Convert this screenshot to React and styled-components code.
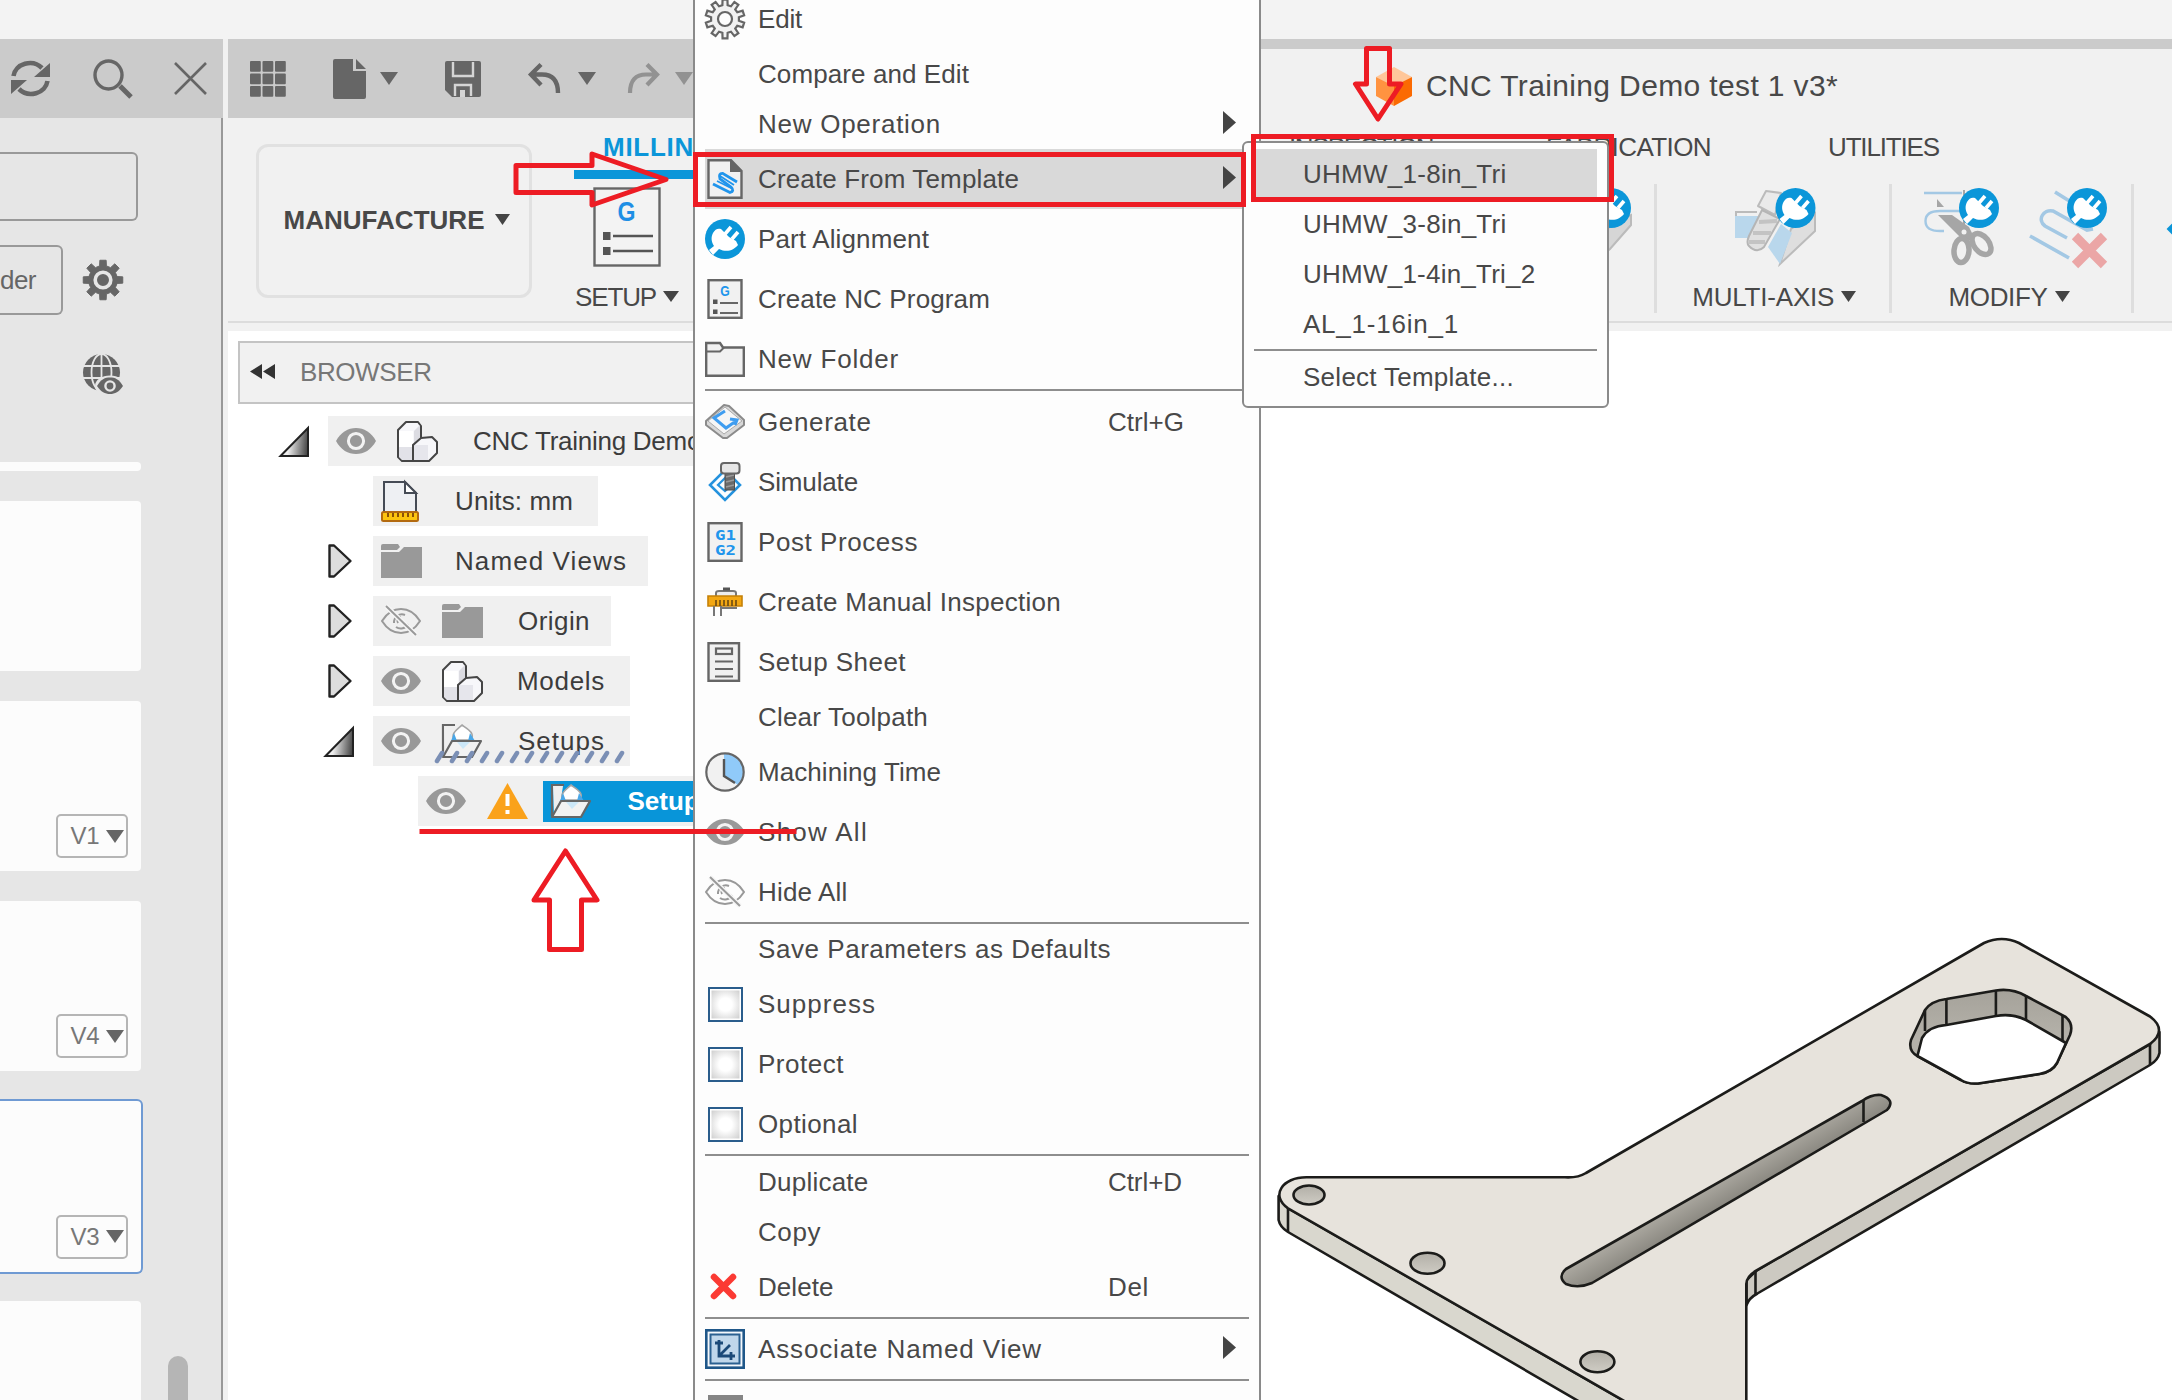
import React, { useLayoutEffect, useRef } from "react";
import styled, { createGlobalStyle, css } from "styled-components";

const Global = createGlobalStyle`
  * { box-sizing: border-box; }
  body { margin: 0; overflow: hidden; background: #fff; }
  svg { display: block; flex: none; overflow: visible; }
`;

/* ---------- text ---------- */
const FitSpan = styled.span`
  display: inline-block;
  white-space: pre;
  flex: none;
`;

/* Label whose tracking is adjusted so that it fills its design width. */
function Fit({ w, children }) {
  const ref = useRef(null);
  useLayoutEffect(() => {
    const el = ref.current;
    el.style.letterSpacing = "0px";
    const natural = el.getBoundingClientRect().width;
    el.style.letterSpacing = `${(w - natural) / children.length}px`;
  }, [w, children]);
  return <FitSpan ref={ref}>{children}</FitSpan>;
}

/* ---------- icons ---------- */
const gearPath = (n, c, inner, outer) => {
  const pts = [];
  const step = (Math.PI * 2) / n;
  for (let i = 0; i < n; i++) {
    const a = i * step - Math.PI / 2;
    [[-0.3, inner], [-0.2, outer], [0.2, outer], [0.3, inner]].forEach(([o, r]) =>
      pts.push(`${(c + r * Math.cos(a + o * step)).toFixed(2)} ${(c + r * Math.sin(a + o * step)).toFixed(2)}`)
    );
  }
  return `M${pts.join("L")}Z`;
};

const Svg = ({ w = 40, h = 40, children }) => (
  <svg width={w} height={h} viewBox={`0 0 ${w} ${h}`} fill="none">{children}</svg>
);

const Plug = () => (
  <g>
    <circle cx="20" cy="20" r="20" fill="#0b96d9" />
    <path d="M8 14C10 10 13 9 16 10L20 14L24 18L31 22L33 26C29 31 22 34 14 30L8 36L4 31L9 27C6 22 6 18 8 14Z" fill="#fff" />
    <path d="M20 15L26 8M27 20L33 13" stroke="#fff" strokeWidth="3.6" />
  </g>
);

const Caret = ({ w = 16, h = 11, c = "#444" }) => (
  <Svg w={w} h={h}><path d={`M0 0H${w}L${w / 2} ${h}Z`} fill={c} /></Svg>
);

const EyeIcon = () => (
  <Svg w={40} h={26}>
    <path d="M0 13C5 4 12 0 20 0S35 4 40 13C35 22 28 26 20 26S5 22 0 13Z" fill="#999" />
    <circle cx="20" cy="13" r="7.6" stroke="#f3f3f3" strokeWidth="3" />
    <circle cx="20" cy="13" r="4" fill="#999" />
  </Svg>
);
const EyeOffIcon = () => (
  <Svg w={40} h={30}>
    <path d="M1 15C6 7 12 3 20 3S34 7 39 15C34 23 28 27 20 27S6 23 1 15Z" stroke="#999" strokeWidth="2" />
    <path d="M27 18A8 8 0 0 1 15 21M13 17A8 8 0 0 1 24 9" stroke="#999" strokeWidth="2" />
    <path d="M17 17A4 4 0 0 1 20 11" stroke="#999" strokeWidth="2" />
    <path d="M5 0L35 29" stroke="#f6f6f6" strokeWidth="5" />
    <path d="M5 0L35 29" stroke="#999" strokeWidth="2" />
  </Svg>
);
const ModelIcon = () => (
  <Svg w={41} h={41}>
    <path d="M1 9L9 1H21L24 5V17L35 16L40 21V32L32 40H5L1 36Z" fill="#f7f7fa" stroke="#454545" strokeWidth="2" strokeLinejoin="round" />
    <path d="M2 26H16V10H2Z" fill="#fff" /><path d="M2 26H15V39H5L2 36Z" fill="#e2e2e8" />
    <path d="M17 24H31V39H17Z" fill="#e6e6ec" /><path d="M17 10L23 4V16L17 24Z" fill="#dcdce2" />
    <path d="M16 40V24L24 17" stroke="#454545" strokeWidth="2" />
  </Svg>
);
const FolderSolid = () => (
  <Svg w={41} h={34}>
    <path d="M0 2Q0 0 2 0H17L19 3L16 6H0Z" fill="#999" />
    <path d="M0 8H18L23 3H41V34H0Z" fill="#999" />
  </Svg>
);
const UnitsIcon = () => (
  <Svg w={38} h={41}>
    <path d="M3 1H24L35 12V32H3Z" fill="#eef0f3" stroke="#454b55" strokeWidth="2" />
    <path d="M24 1V12H35Z" fill="#fff" stroke="#454b55" strokeWidth="2" />
    <rect x="1" y="31" width="36" height="9" rx="1.5" fill="#fcc40e" stroke="#b36a10" strokeWidth="2" />
    <path d="M7 32V36M12 32V36M17 32V36M22 32V36M27 32V36M32 32V36" stroke="#8a5208" strokeWidth="2" />
  </Svg>
);
const SetupFolder = ({ fill = "#efefef" }) => (
  <Svg w={41} h={34}>
    <path d="M1 32V1H13" stroke="#666" strokeWidth="2.2" />
    <path d="M2 2H12L10 15L3 31Z" fill={fill} />
    <path d="M12 16C9 10 13 7 20 1C27 6 33 9 29 16Z" fill="#fff" stroke="#a5a5a5" strokeWidth="1.6" />
    <path d="M12 9L9 17H15ZM28 9L33 17H26Z" fill="#49a7e8" />
    <path d="M10 17H39L30 33H1Z" fill="#f2f2f2" stroke="#666" strokeWidth="2.2" strokeLinejoin="round" />
    <path d="M15 18H28L21 25Z" fill="#cbe7f8" />
  </Svg>
);
const WarnIcon = () => (
  <Svg w={41} h={36}>
    <path d="M20.500 0L41 36H0Z" fill="#faa21b" />
    <path d="M20.500 11V23M20.500 27V31" stroke="#fff" strokeWidth="4" />
  </Svg>
);
const Expanded = () => (
  <Svg w={30} h={31}>
    <defs><linearGradient id="tri" x1="0" x2="1" y1="0.500" y2="0.600"><stop offset="0.300" stopColor="#eee" /><stop offset="1" stopColor="#444" /></linearGradient></defs>
    <path d="M1.500 30L29 2V30Z" fill="url(#tri)" stroke="#222" strokeWidth="2" />
  </Svg>
);
const Collapsed = () => (
  <Svg w={24} h={34}><path d="M1.500 1.500H6L22.500 17L6 32.500H1.500Z" fill="#ddd" stroke="#222" strokeWidth="2.400" strokeLinejoin="round" /></Svg>
);

const RefreshIcon = () => (
  <Svg w={41} h={37}>
    <path d="M3.500 16A16.500 15 0 0 1 32 8M37.500 21A16.500 15 0 0 1 9 29" stroke="#666" strokeWidth="4.600" />
    <path d="M40 3V17H24ZM1 34V20H17Z" fill="#666" />
  </Svg>
);
const SearchIcon = () => (
  <Svg w={40} h={40}>
    <ellipse cx="15.500" cy="16" rx="13.500" ry="14" stroke="#666" strokeWidth="3.400" />
    <path d="M27 27L38 38" stroke="#666" strokeWidth="5" />
  </Svg>
);
const CloseIcon = () => <Svg w={33} h={33}><path d="M1 1L32 32M32 1L1 32" stroke="#666" strokeWidth="2.600" /></Svg>;
const GridIcon = () => (
  <Svg w={36} h={36}>
    {[0, 12.5, 25].map((x) => [0, 12.5, 25].map((y) => <rect key={`${x}-${y}`} x={x} y={y} width="10.800" height="10.800" rx="1" fill="#666" />))}
  </Svg>
);
const FileIcon = () => (
  <Svg w={33} h={40}><path d="M2 0H20V12H33V38Q33 40 31 40H2Q0 40 0 38V2Q0 0 2 0ZM23 0L33 10H23Z" fill="#666" /></Svg>
);
const SaveIcon = () => (
  <Svg w={36} h={36}>
    <path d="M2 0H34Q36 0 36 2V34Q36 36 34 36H7L0 29V2Q0 0 2 0Z" fill="#666" />
    <path d="M8 1V15H28V1" stroke="#d5d5d5" strokeWidth="2.400" />
    <path d="M10 35V24H26V35" stroke="#d5d5d5" strokeWidth="2.400" />
    <rect x="15" y="29" width="5" height="7" fill="#d5d5d5" />
  </Svg>
);
const UndoIcon = ({ c = "#666" }) => (
  <Svg w={33} h={31}><path d="M13 1.500L3 11.500L13 22M3 11.500H14C24 11.500 30 17 30 30" stroke={c} strokeWidth="4.400" /></Svg>
);
const RedoIcon = () => (
  <Svg w={33} h={31}><path d="M20 1.500L30 11.500L20 22M30 11.500H19C9 11.500 3 17 3 30" stroke="#929292" strokeWidth="4.200" /></Svg>
);
const GearSolid = () => (
  <Svg>
    <path d={gearPath(8, 20, 14.5, 20)} fill="#666" stroke="#666" />
    <circle cx="20" cy="20" r="7.800" stroke="#e6e6e6" strokeWidth="3.600" />
  </Svg>
);
const GlobeIcon = () => (
  <Svg>
    <circle cx="18.500" cy="18.500" r="18.500" fill="#666" />
    <path d="M18.500 0V37M0 12H37M0 24H37" stroke="#e6e6e6" strokeWidth="1.800" />
    <ellipse cx="18.500" cy="18.500" rx="10" ry="18.500" stroke="#e6e6e6" strokeWidth="1.800" />
    <ellipse cx="27" cy="32" rx="15" ry="10.500" fill="#e6e6e6" />
    <path d="M14 32C18 25 22 23.500 27 23.500S36 25 40 32C36 38 32 40 27 40S18 38 14 32Z" fill="#666" />
    <circle cx="27" cy="32" r="4.600" stroke="#e6e6e6" strokeWidth="2.400" />
  </Svg>
);
const RewindIcon = () => <Svg w={25} h={15}><path d="M12 0V15L0 7.500ZM25 0V15L13 7.500Z" fill="#333" /></Svg>;
const CubeIcon = () => (
  <Svg w={36} h={39}>
    <path d="M18 0L36 10L18 19L0 10Z" fill="#ffc79a" />
    <path d="M0 10L18 19V39L0 29Z" fill="#ff9340" /><path d="M36 10L18 19V39L36 29Z" fill="#fb6a02" />
  </Svg>
);
const SetupRibbonIcon = () => (
  <Svg w={68} h={80}>
    <rect x="1.500" y="1.500" width="65" height="77" fill="#f3f3f3" stroke="#666" strokeWidth="2.400" />
    <text x="33.500" y="34" textAnchor="middle" fontFamily="Liberation Sans, sans-serif" fontWeight="700" fontSize="28" textLength="18" lengthAdjust="spacingAndGlyphs" fill="#1f8fe5">G</text>
    <path d="M10 45H17.500V53H10ZM10 60H17.500V68H10Z" fill="#555" />
    <path d="M20 49H60M20 64H60" stroke="#555" strokeWidth="2.400" />
  </Svg>
);
const PocketIcon = () => (
  <Svg w={81} h={80}>
    <path d="M60 38L81 28V38L60 62L40 78Z" fill="#d6d6d6" stroke="#bbb" strokeWidth="2" />
    <g transform="translate(41 1)"><Plug /></g>
  </Svg>
);
const MultiAxisIcon = () => (
  <Svg w={81} h={80}>
    <path d="M0 29H27V51H0Z" fill="#b9d7ec" />
    <path d="M1 25H22" stroke="#bbb" strokeWidth="2" /><path d="M1 24V29" stroke="#bbb" strokeWidth="2" />
    <path d="M56 42L80 26V44L45 77Z" fill="#dedede" stroke="#bbb" strokeWidth="2" />
    <path d="M33 60L46 37L57 46L45 77Z" fill="#b9d7ec" />
    <path d="M31 4L46 6L40 28L23 19Z" fill="#eaeaea" stroke="#bbb" strokeWidth="2" strokeLinejoin="round" />
    <path d="M27 23L45 32L29 60Q22 67 14 59Q11 56 14 49Z" fill="#e0e0e0" stroke="#b5b5b5" strokeWidth="2" />
    <path d="M24 35L42 34M18 46L36 46M14 55L30 55" stroke="#c3c3c3" strokeWidth="4" />
    <g transform="translate(40.500 1)"><Plug /></g>
  </Svg>
);
const ScissorsIcon = () => (
  <Svg w={76} h={80}>
    <path d="M0 6H38M20 24H36M20 44H16C8 44 1.500 42 1.500 34S8 24 16 24H20" stroke="#a3c8e4" strokeWidth="2.400" />
    <path d="M13 12V20H20Z" fill="#a6a6a6" />
    <path d="M14 28H28L45 40L50 50L42 56L34 48Z" fill="#a6a6a6" />
    <path d="M40 3V50" stroke="#a6a6a6" strokeWidth="2" />
    <circle cx="40" cy="45" r="2.500" fill="#f1f1f1" />
    <ellipse cx="37.500" cy="63.500" rx="7.500" ry="12" stroke="#a6a6a6" strokeWidth="5.500" transform="rotate(4 37.500 63.500)" />
    <ellipse cx="57.500" cy="57" rx="7.500" ry="12" stroke="#a6a6a6" strokeWidth="5.500" transform="rotate(-38 57.500 57)" />
    <g transform="translate(35 1)"><Plug /></g>
  </Svg>
);
const DeletePassIcon = () => (
  <Svg w={78} h={80}>
    <path d="M26 5L42 15M1 49L40 71M38 51L16 39C8 33 14 22 24 24L58 43L64 42" stroke="#a3c8e4" strokeWidth="3.600" />
    <path d="M46 49L75 78M75 49L46 78" stroke="#eba6a6" strokeWidth="9" />
    <g transform="translate(38 1)"><Plug /></g>
  </Svg>
);
const NextIcon = () => <Svg w={20} h={80}><path d="M0 42L7 35V49Z" fill="#0b96d9" stroke="#0b96d9" strokeWidth="2" /></Svg>;

const ICONS = {
  gear: (
    <Svg>
      <path d={gearPath(10, 20, 14, 19.5)} fill="#f1f1f1" stroke="#666" strokeWidth="2.200" />
      <circle cx="20" cy="20" r="7" fill="#fdfdfd" stroke="#666" strokeWidth="2.200" />
    </Svg>
  ),
  template: (
    <Svg>
      <path d="M3.500 1.200H26L36.500 12V38.800H3.500Z" fill="#f1f1f1" stroke="#666" strokeWidth="2.400" />
      <path d="M25 1V13H37Z" fill="#666" />
      <path d="M8 25L25 33.500Q30 32 26 28L15 20Q13 14 18 14.500L32 23" stroke="#2095ec" strokeWidth="2.800" />
      <path d="M12 22L27 29.500M15 17L29 26" stroke="#2095ec" strokeWidth="1.800" />
    </Svg>
  ),
  plug: <Svg><Plug /></Svg>,
  nc: (
    <Svg>
      <rect x="3.500" y="1.200" width="33" height="37.600" fill="#f1f1f1" stroke="#666" strokeWidth="2.400" />
      <text x="20" y="17" textAnchor="middle" fontFamily="Liberation Sans, sans-serif" fontWeight="700" fontSize="15" textLength="9.500" lengthAdjust="spacingAndGlyphs" fill="#2095ec">G</text>
      <path d="M8 20.500H12.500V25H8ZM8 30.500H12.500V35H8Z" fill="#555" />
      <path d="M15 24H33M15 34H33" stroke="#666" strokeWidth="2.200" />
    </Svg>
  ),
  folder: (
    <Svg w={40} h={36}>
      <path d="M1.200 34V2H15L18 6.500H38.800V34.800H1.200Z" fill="#f1f1f1" stroke="#666" strokeWidth="2.400" />
      <path d="M1 10.500H15L19 6.500" stroke="#666" strokeWidth="2" />
    </Svg>
  ),
  generate: (
    <Svg w={40} h={35}>
      <path d="M1 17L19 1L24 2L39 16V21L22 34H18L1 21Z" fill="#d8d8d8" stroke="#8b8b8b" strokeWidth="2" strokeLinejoin="round" />
      <path d="M3 17L20 3L37 17L19 30Z" fill="#f6f6f6" stroke="#aaa" />
      <path d="M20 7L9 14L21 24L31 17M25 15L32 16L30 21" stroke="#3f9df0" strokeWidth="3" />
    </Svg>
  ),
  simulate: (
    <Svg>
      <path d="M20 8L35 23L20 38L5 23Z" fill="#fafdff" stroke="#2492de" strokeWidth="2.600" />
      <path d="M20 16L27 23L20 29L13 23Z" stroke="#2492de" strokeWidth="2.200" />
      <rect x="20" y="11" width="9.500" height="17" fill="#6a6a6a" stroke="#4f4f4f" />
      <path d="M21 15L29 13M21 20L29 18M21 25L29 23" stroke="#999" strokeWidth="1.500" />
      <rect x="16" y="1" width="18.500" height="10.500" rx="3" fill="#e6e6e6" stroke="#666" strokeWidth="2" />
    </Svg>
  ),
  post: (
    <Svg>
      <rect x="3.500" y="1.200" width="33" height="37.600" fill="#f1f1f1" stroke="#666" strokeWidth="2.400" />
      <text x="10" y="17.500" fontFamily="DejaVu Sans Mono, monospace" fontWeight="700" fontSize="14" textLength="21" lengthAdjust="spacingAndGlyphs" fill="#2095ec">G1</text>
      <text x="10" y="33" fontFamily="DejaVu Sans Mono, monospace" fontWeight="700" fontSize="14" textLength="21" lengthAdjust="spacingAndGlyphs" fill="#2095ec">G2</text>
    </Svg>
  ),
  inspect: (
    <Svg w={40} h={28}>
      <path d="M11 8V5Q11 3 14 3H28Q31 3 31 5V8" fill="#eee" stroke="#777" strokeWidth="2" />
      <path d="M18 1H25" stroke="#555" strokeWidth="3" />
      <path d="M3 8H37V18H3Z" fill="#f3a712" stroke="#c58108" strokeWidth="1.600" />
      <path d="M11 12V18M15 12V18M19 12V18M23 12V18M27 12V18M31 12V18" stroke="#6b4a12" strokeWidth="1.600" />
      <path d="M9 18V28M16 18V28M16 20H32" stroke="#777" strokeWidth="2" />
    </Svg>
  ),
  sheet: (
    <Svg>
      <rect x="3.500" y="1.200" width="30.500" height="37.600" fill="#f1f1f1" stroke="#666" strokeWidth="2.400" />
      <rect x="11" y="6.500" width="16" height="5.500" stroke="#666" strokeWidth="2.200" />
      <path d="M10 19.500H28M10 27H28M10 34.500H28" stroke="#666" strokeWidth="2.200" />
    </Svg>
  ),
  clock: (
    <Svg>
      <circle cx="20" cy="20" r="18.700" fill="#f1f1f1" />
      <path d="M19 1.500A18.700 18.700 0 0 1 33 33L19 24Z" fill="#90caf9" />
      <circle cx="20" cy="20" r="18.700" stroke="#666" strokeWidth="2.200" />
      <path d="M19 7V24L30 31" stroke="#555" strokeWidth="2.400" />
    </Svg>
  ),
  eye: <EyeIcon />,
  eyeOff: <EyeOffIcon />,
  delete: <Svg w={30} h={28}><path d="M4 4L23 23M23 4L4 23" stroke="#fb3a33" strokeWidth="6.500" strokeLinecap="round" /></Svg>,
  view: (
    <Svg>
      <rect x="1.300" y="1.300" width="37.400" height="37.400" fill="#f4f8fc" stroke="#1f5789" strokeWidth="2.600" />
      <rect x="5.500" y="5.500" width="29" height="29" fill="#c0d7eb" stroke="#2b6191" strokeWidth="2" />
      <path d="M14 11V27H30M14 27L25 16M10 14H18M26 23V31" stroke="#1c4a78" strokeWidth="2.800" />
    </Svg>
  ),
};

const Checkbox = styled.span`
  width: 35px;
  height: 35px;
  border: 2.5px solid #2a5d8c;
  background: radial-gradient(circle, #fff 30%, #c6c6c6 100%);
  box-shadow: inset 0 0 0 1.5px #fff;
`;

/* ---------- shell ---------- */
const Shell = styled.div`
  position: relative;
  display: flex;
  flex-direction: column;
  width: 2172px;
  height: 1400px;
  overflow: hidden;
  background: #f1f1f1;
  color: #484848;
  font: 26px/30px "Liberation Sans", Arial, sans-serif;
`;
const TopStrip = styled.div`
  flex: none;
  height: 39px;
  background: #f3f3f3;
`;
const Columns = styled.div`
  display: flex;
  flex: 1;
  min-height: 0;
`;

/* ---------- data panel ---------- */
const DataPanel = styled.aside`
  flex: none;
  width: 223px;
  display: flex;
  flex-direction: column;
`;
const PanelBar = styled.div`
  flex: none;
  height: 79px;
  display: flex;
  align-items: center;
  justify-content: space-between;
  padding: 0 16px 0 10px;
  background: #cbcbcb;
`;
const PanelBody = styled.div`
  flex: 1;
  min-height: 0;
  display: flex;
  flex-direction: column;
  background: #e6e6e6;
  border-right: 2px solid #999;
`;
const SearchField = styled.div`
  flex: none;
  width: 138px;
  height: 69px;
  margin-top: 34px;
  border: 2px solid #999;
  border-left: 0;
  border-radius: 0 6px 6px 0;
`;
const PanelActions = styled.div`
  display: flex;
  align-items: center;
  gap: 20px;
  margin-top: 24px;
`;
const PanelButton = styled.div`
  width: 63px;
  height: 70px;
  display: flex;
  align-items: center;
  padding-bottom: 1px;
  border: 2px solid #999;
  border-left: 0;
  border-radius: 0 6px 6px 0;
  color: #666;
`;
const GlobeRow = styled.div`
  height: 40px;
  margin: 39px 0 68px 83px;
`;
const ListArea = styled.div`
  flex: 1;
  min-height: 0;
  display: flex;
  justify-content: space-between;
  overflow: hidden;
`;
const CardList = styled.div`
  width: 144px;
  display: flex;
  flex-direction: column;
  gap: 30px;
`;
const Card = styled.div`
  flex: none;
  width: 141px;
  height: ${(p) => p.$h || 170}px;
  display: flex;
  align-items: flex-end;
  justify-content: flex-end;
  background: #fcfcfc;
  border-radius: 0 4px 4px 0;
  ${(p) => p.$active && css`
    width: 143px;
    height: 175px;
    margin: -2.500px 0;
    border: 2px solid #6f9ad3;
    border-left: 0;
    border-radius: 0 6px 6px 0;
  `}
`;
const Version = styled.div`
  width: 72px;
  height: 44px;
  margin: 0 13px 13px 0;
  display: flex;
  align-items: center;
  gap: 6px;
  padding-left: 12.500px;
  border: 2px solid #b5b5b5;
  border-radius: 5px;
  color: #777;
  font-size: 24px;
`;
const ScrollThumb = styled.div`
  align-self: flex-end;
  width: 20px;
  height: 44px;
  margin-right: 33px;
  border-radius: 10px 10px 0 0;
  background: #b5b5b5;
`;

/* ---------- workspace ---------- */
const Workspace = styled.main`
  flex: 1;
  min-width: 0;
  margin-left: 5px;
  display: flex;
  flex-direction: column;
`;
const DocBar = styled.div`
  flex: none;
  height: 79px;
  display: flex;
  background: #cbcbcb;
`;
const QuickTools = styled.div`
  width: 1000px;
  display: flex;
  align-items: center;
  padding-left: 22px;
`;
const Tool = styled.span`
  display: flex;
  align-items: center;
  gap: ${(p) => p.$gap || 0}px;
  margin-right: ${(p) => p.$after || 0}px;
`;
const DocTab = styled.div`
  flex: 1;
  display: flex;
  align-items: center;
  gap: 14.500px;
  margin-top: 10px;
  padding: 5px 0 0 147.500px;
  background: #f1f1f1;
  font-size: 30px;
`;
const Ribbon = styled.div`
  flex: none;
  height: 213px;
  display: flex;
  background: linear-gradient(#dcdcdc, #dcdcdc) 0 203px / 100% 2px no-repeat #f1f1f1;
`;
const WorkspaceSwitch = styled.div`
  flex: none;
  width: 276px;
  height: 154px;
  margin: 26px 0 0 28px;
  display: flex;
  align-items: center;
  gap: 10px;
  padding: 0 0 3px 24.500px;
  border: 3px solid #e1e1e1;
  border-radius: 12px;
  font-weight: 700;
`;
const RibbonMain = styled.div`
  flex: 1;
  min-width: 0;
  display: flex;
  flex-direction: column;
`;
const Tabs = styled.div`
  height: 61px;
  display: flex;
  padding-left: 42px;
`;
const Tab = styled.div`
  flex: none;
  width: ${(p) => p.$w}px;
  padding: 13.500px 0 0 ${(p) => p.$pad || 1}px;
  ${(p) => p.$active && css`
    border-bottom: 9px solid #0b96d9;
    color: #0b96d9;
    font-weight: 700;
  `}
`;
const Groups = styled.div`
  display: flex;
  height: 140px;
  overflow: hidden;
`;
const Group = styled.div`
  flex: none;
  width: ${(p) => p.$w}px;
  height: 129px;
  margin-top: 5px;
  display: flex;
  flex-direction: column;
  align-items: ${(p) => p.$align || "center"};
  padding-right: ${(p) => p.$padR || 0}px;
  border-right: ${(p) => (p.$line ? "3px solid #dedede" : "0")};
`;
const GroupIcons = styled.div`
  display: flex;
  gap: 29px;
  height: 80px;
  margin: 2.500px 0 0 ${(p) => p.$shift || 0}px;
`;
const GroupLabel = styled.div`
  display: flex;
  align-items: center;
  gap: 7px;
  height: 30px;
  margin: 15px 0 0 ${(p) => p.$shift || 0}px;
`;

/* ---------- browser tree ---------- */
const Canvas = styled.div`
  position: relative;
  flex: 1;
  min-height: 0;
  background: #fff;
`;
const Browser = styled.div`
  width: 560px;
  padding: 10px 0 0 10px;
`;
const BrowserHead = styled.div`
  height: 63px;
  display: flex;
  align-items: center;
  gap: 25px;
  padding: 0 0 2px 10px;
  background: #f1f1f1;
  border: 2px solid #c4c4c4;
  color: #777;
`;
const Tree = styled.div`
  display: flex;
  flex-direction: column;
  gap: 10px;
  margin-top: 12px;
`;
const TreeRow = styled.div`
  display: flex;
  align-items: center;
  height: 50px;
  padding-left: ${(p) => p.$indent}px;
`;
const Expander = styled.span`
  width: ${(p) => p.$w || 49}px;
  display: flex;
`;
const TreeItem = styled.div`
  position: relative;
  display: flex;
  align-items: center;
  width: ${(p) => p.$w}px;
  height: 50px;
  padding-left: 7.500px;
  background: #f0f0f0;
  color: #3c3c3c;
`;
const IconSlot = styled.span`
  width: ${(p) => p.$w}px;
  display: flex;
  flex: none;
`;
const Selected = styled.div`
  flex: 1;
  height: 41px;
  display: flex;
  align-items: center;
  padding-left: 8px;
  background: #0895d9;
  color: #fff;
  font-weight: 700;
`;
const Hatch = styled.div`
  position: absolute;
  left: 61px;
  bottom: 3px;
`;
const PartView = styled.div`
  position: absolute;
  left: 1032px;
  top: 569px;
`;

/* ---------- menus ---------- */
const Menu = styled.div`
  position: absolute;
  left: 693px;
  top: -14px;
  width: 568px;
  height: 1440px;
  padding: 1px 10px 0;
  background: #fdfdfd;
  border: 2px solid #8a8a8a;
`;
const MenuRow = styled.div`
  display: flex;
  align-items: center;
  height: ${(p) => (p.$tall ? 60 : 50)}px;
  background: ${(p) => (p.$hot ? "#d9d9d9" : "transparent")};
`;
const MenuIcon = styled.span`
  width: 53px;
  flex: none;
  display: flex;
`;
const MenuIconBox = styled.span`
  width: 40px;
  display: flex;
  justify-content: center;
`;
const MenuText = styled.span`
  width: 350px;
  flex: none;
`;
const Shortcut = styled.span`
  width: 115px;
  flex: none;
`;
const Rule = styled.div`
  height: 2.500px;
  border-top: 2px solid #8e8e8e;
`;
const Submenu = styled.div`
  position: absolute;
  left: 1241.500px;
  top: 141px;
  width: 367px;
  height: 267px;
  padding: 6px 10px 0;
  background: #fdfdfd;
  border: 2px solid #8a8a8a;
  border-radius: 6px;
`;
const SubRow = styled.div`
  display: flex;
  align-items: center;
  height: 50px;
  padding-left: 49.500px;
  background: ${(p) => (p.$hot ? "#d9d9d9" : "transparent")};
`;
const NextRowIcon = styled.div`
  width: 35px;
  height: 20px;
  margin: 13px 0 0 2.500px;
  background: #858585;
`;

/* ---------- annotations ---------- */
const RedBox = styled.div`
  position: absolute;
  left: ${(p) => p.$x}px;
  top: ${(p) => p.$y}px;
  width: ${(p) => p.$w}px;
  height: ${(p) => p.$h}px;
  border: 5px solid #ed1c24;
`;
const RedMarks = styled.div`
  position: absolute;
  left: 0;
  top: 0;
`;

const MENU = [
  { t: "Edit", w: 44, icon: "gear" },
  { t: "Compare and Edit", w: 211 },
  { t: "New Operation", w: 183, sub: true },
  { t: "Create From Template", w: 261, icon: "template", sub: true, hot: true },
  { t: "Part Alignment", w: 171, icon: "plug" },
  { t: "Create NC Program", w: 232, icon: "nc" },
  { t: "New Folder", w: 141, icon: "folder" },
  null,
  { t: "Generate", w: 113.5, icon: "generate", key: "Ctrl+G", kw: 76 },
  { t: "Simulate", w: 100, icon: "simulate" },
  { t: "Post Process", w: 160, icon: "post" },
  { t: "Create Manual Inspection", w: 303, icon: "inspect" },
  { t: "Setup Sheet", w: 148, icon: "sheet" },
  { t: "Clear Toolpath", w: 170 },
  { t: "Machining Time", w: 183, icon: "clock" },
  { t: "Show All", w: 110, icon: "eye" },
  { t: "Hide All", w: 89.5, icon: "eyeOff" },
  null,
  { t: "Save Parameters as Defaults", w: 353 },
  { t: "Suppress", w: 118, check: true },
  { t: "Protect", w: 86, check: true },
  { t: "Optional", w: 100, check: true },
  null,
  { t: "Duplicate", w: 110.5, key: "Ctrl+D", kw: 74 },
  { t: "Copy", w: 63 },
  { t: "Delete", w: 75.5, icon: "delete", key: "Del", kw: 41 },
  null,
  { t: "Associate Named View", w: 284, icon: "view", sub: true },
  null,
];

const TEMPLATES = [
  { t: "UHMW_1-8in_Tri", w: 203.5, hot: true },
  { t: "UHMW_3-8in_Tri", w: 203.5 },
  { t: "UHMW_1-4in_Tri_2", w: 232.5 },
  { t: "AL_1-16in_1", w: 156 },
  null,
  { t: "Select Template...", w: 211 },
];

const CARDS = [{ h: 9 }, {}, { v: "V1" }, { v: "V4" }, { v: "V3", active: true }, {}];

function Part() {
  const line = { stroke: "#1c1c1a", strokeWidth: 2.6, strokeLinejoin: "round" };
  return (
    <svg width="912" height="500" viewBox="1260 900 912 500" fill="none">
      <defs>
        <linearGradient id="slot" x1="1720" y1="1180" x2="1740" y2="1214" gradientUnits="userSpaceOnUse">
          <stop offset="0" stopColor="#aaa79f" /><stop offset="1" stopColor="#77756e" />
        </linearGradient>
        <linearGradient id="wall" x1="0" y1="0" x2="0" y2="1"><stop offset="0" stopColor="#a5a29a" /><stop offset="0.500" stopColor="#b4b1a9" /></linearGradient>
        <linearGradient id="bore" x1="0" y1="0" x2="0" y2="1"><stop offset="0" stopColor="#b2afa7" /><stop offset="1" stopColor="#cfccc4" /></linearGradient>
      </defs>
      <path d="M1278.600 1196V1220Q1280 1227 1288 1232L1580 1402H1626L1288 1208Z" fill="#d9d7ce" {...line} />
      <path d="M1288 1208V1232" {...line} />
      <path d="M2159.500 1032V1053Q2158 1060 2150 1065L1757.400 1293.500Q1749 1298 1746.500 1305V1280L1757 1270L2150 1044Z" fill="#ccc9c1" {...line} />
      <path d="M2150 1044V1065M1755.500 1271V1294" {...line} />
      <path d="M1307 1177.300H1565Q1578 1178 1586 1173L1984 943Q2002 935 2019 943L2150 1016.500Q2168 1030 2150 1044L1757.400 1270Q1746.500 1276 1746.300 1284V1402H1626L1288 1208.300C1270 1196 1282 1177 1307 1177.300Z" fill="#e7e3dc" {...line} />
      <path d="M1946.400 999L1995.900 990.500Q2012 988 2026 996L2065.700 1017Q2074 1024 2070 1035L2057 1063Q2052 1072 2039.500 1074L1981.400 1083Q1969 1085 1961 1080L1917.400 1056Q1908 1051 1911 1040L1925 1010Q1931 1001 1946.400 999Z" fill="url(#wall)" {...line} />
      <path d="M1917.400 1056Q1919 1050 1922 1038Q1929 1026 1946.400 1025L1995.900 1016Q2012 1013 2026 1020L2066 1043L2057 1063Q2052 1072 2039.500 1074L1981.400 1083Q1969 1085 1961 1080Z" fill="#fff" {...line} />
      <path d="M1925 1010V1031M1946.400 999V1024M1995.900 990V1016M2026 996V1020M2062.500 1015V1041" {...line} />
      <path d="M1862 1101Q1872 1094 1881 1095Q1896 1100 1887 1110L1592 1283Q1578 1289 1566 1284Q1557 1277 1566 1269Z" fill="url(#slot)" {...line} />
      <path d="M1863.500 1100V1122" {...line} />
      <ellipse cx="1309" cy="1195" rx="15.500" ry="9.500" fill="url(#bore)" {...line} />
      <ellipse cx="1427.500" cy="1263.300" rx="17" ry="10.500" fill="url(#bore)" {...line} />
      <ellipse cx="1597.400" cy="1361.700" rx="17" ry="10.500" fill="url(#bore)" {...line} />
    </svg>
  );
}

const SubArrow = () => <Svg w={13} h={27}><path d="M0 0L13 11.500L0 23Z" fill="#444" /></Svg>;

export default function App() {
  return (
    <Shell>
      <Global />
      <TopStrip />
      <Columns>
        <DataPanel>
          <PanelBar><RefreshIcon /><SearchIcon /><CloseIcon /></PanelBar>
          <PanelBody>
            <SearchField />
            <PanelActions><PanelButton><Fit w={36}>der</Fit></PanelButton><GearSolid /></PanelActions>
            <GlobeRow><GlobeIcon /></GlobeRow>
            <ListArea>
              <CardList>
                {CARDS.map((c, i) => (
                  <Card key={i} $h={c.h} $active={c.active}>
                    {c.v && <Version><Fit w={29}>{c.v}</Fit><Caret w={18} h={13} c="#666" /></Version>}
                  </Card>
                ))}
              </CardList>
              <ScrollThumb />
            </ListArea>
          </PanelBody>
        </DataPanel>
        <Workspace>
          <DocBar>
            <QuickTools>
              <Tool $after={47}><GridIcon /></Tool>
              <Tool $gap={14} $after={47}><FileIcon /><Caret w={18} h={13} c="#666" /></Tool>
              <Tool $after={47}><SaveIcon /></Tool>
              <Tool $gap={17} $after={31}><UndoIcon /><Caret w={18} h={13} c="#666" /></Tool>
              <Tool $gap={15}><RedoIcon /><Caret w={18} h={13} c="#929292" /></Tool>
            </QuickTools>
            <DocTab><CubeIcon /><Fit w={412}>CNC Training Demo test 1 v3*</Fit></DocTab>
          </DocBar>
          <Ribbon>
            <WorkspaceSwitch><Fit w={201}>MANUFACTURE</Fit><Caret w={15} h={11} /></WorkspaceSwitch>
            <RibbonMain>
              <Tabs>
                <Tab $w={714} $pad={29} $active><Fit w={112}>MILLING</Fit></Tab>
                <Tab $w={257}><Fit w={144}>INSPECTION</Fit></Tab>
                <Tab $w={282}><Fit w={165}>FABRICATION</Fit></Tab>
                <Tab $w={120}><Fit w={111}>UTILITIES</Fit></Tab>
              </Tabs>
              <Groups>
                <Group $w={190}>
                  <GroupIcons><SetupRibbonIcon /></GroupIcons>
                  <GroupLabel><Fit w={81}>SETUP</Fit><Caret /></GroupLabel>
                </Group>
                <Group $w={934.5} $line $align="flex-end" $padR={22.5}>
                  <GroupIcons><PocketIcon /></GroupIcons>
                </Group>
                <Group $w={235.5} $line>
                  <GroupIcons $shift={6}><MultiAxisIcon /></GroupIcons>
                  <GroupLabel $shift={3}><Fit w={142}>MULTI-AXIS</Fit><Caret w={15} /></GroupLabel>
                </Group>
                <Group $w={242} $line $padR={5}>
                  <GroupIcons $shift={13}><ScissorsIcon /><DeletePassIcon /></GroupIcons>
                  <GroupLabel><Fit w={99}>MODIFY</Fit><Caret w={15} /></GroupLabel>
                </Group>
                <Group $w={54} $align="flex-end">
                  <GroupIcons><NextIcon /></GroupIcons>
                </Group>
              </Groups>
            </RibbonMain>
          </Ribbon>
          <Canvas>
            <PartView><Part /></PartView>
            <Browser>
              <BrowserHead><RewindIcon /><Fit w={131.5}>BROWSER</Fit></BrowserHead>
              <Tree>
                <TreeRow $indent={41}>
                  <Expander><Expanded /></Expander>
                  <TreeItem $w={420}>
                    <IconSlot $w={61}><EyeIcon /></IconSlot>
                    <IconSlot $w={76.5}><ModelIcon /></IconSlot>
                    <Fit w={331}>CNC Training Demo test 1 v3</Fit>
                  </TreeItem>
                </TreeRow>
                <TreeRow $indent={86}>
                  <Expander />
                  <TreeItem $w={225}><IconSlot $w={74.5}><UnitsIcon /></IconSlot><Fit w={118}>Units: mm</Fit></TreeItem>
                </TreeRow>
                <TreeRow $indent={90}>
                  <Expander $w={45}><Collapsed /></Expander>
                  <TreeItem $w={275}><IconSlot $w={74.5}><FolderSolid /></IconSlot><Fit w={172}>Named Views</Fit></TreeItem>
                </TreeRow>
                <TreeRow $indent={90}>
                  <Expander $w={45}><Collapsed /></Expander>
                  <TreeItem $w={238}><IconSlot $w={61.5}><EyeOffIcon /></IconSlot><IconSlot $w={76}><FolderSolid /></IconSlot><Fit w={72}>Origin</Fit></TreeItem>
                </TreeRow>
                <TreeRow $indent={90}>
                  <Expander $w={45}><Collapsed /></Expander>
                  <TreeItem $w={257}><IconSlot $w={61.5}><EyeIcon /></IconSlot><IconSlot $w={75}><ModelIcon /></IconSlot><Fit w={88}>Models</Fit></TreeItem>
                </TreeRow>
                <TreeRow $indent={86}>
                  <Expander><Expanded /></Expander>
                  <TreeItem $w={257}>
                    <IconSlot $w={61.5}><EyeIcon /></IconSlot><IconSlot $w={76}><SetupFolder /></IconSlot><Fit w={87}>Setups</Fit>
                    <Hatch>
                      <Svg w={192} h={12}>
                        {Array.from({ length: 13 }, (_, i) => (
                          <path key={i} d={`M${3 + i * 15} 10L${8 + i * 15} 2`} stroke="#7b8fb5" strokeWidth="4.500" strokeLinecap="round" />
                        ))}
                      </Svg>
                    </Hatch>
                  </TreeItem>
                </TreeRow>
                <TreeRow $indent={180}>
                  <TreeItem $w={330}>
                    <IconSlot $w={61.5}><EyeIcon /></IconSlot>
                    <IconSlot $w={55.5}><WarnIcon /></IconSlot>
                    <Selected><IconSlot $w={77}><SetupFolder /></IconSlot>Setup1</Selected>
                  </TreeItem>
                </TreeRow>
              </Tree>
            </Browser>
          </Canvas>
        </Workspace>
      </Columns>

      <Menu>
        {MENU.map((m, i) =>
          m ? (
            <MenuRow key={i} $tall={m.icon || m.check} $hot={m.hot}>
              <MenuIcon><MenuIconBox>{m.check ? <Checkbox /> : m.icon ? ICONS[m.icon] : null}</MenuIconBox></MenuIcon>
              <MenuText><Fit w={m.w}>{m.t}</Fit></MenuText>
              <Shortcut>{m.key && <Fit w={m.kw}>{m.key}</Fit>}</Shortcut>
              {m.sub && <SubArrow />}
            </MenuRow>
          ) : (
            <Rule key={i} />
          )
        )}
        <NextRowIcon />
      </Menu>

      <Submenu>
        {TEMPLATES.map((m, i) =>
          m ? <SubRow key={i} $hot={m.hot}><Fit w={m.w}>{m.t}</Fit></SubRow> : <Rule key={i} />
        )}
      </Submenu>

      <RedBox $x={693} $y={152} $w={553} $h={55} />
      <RedBox $x={1251} $y={134} $w={363} $h={68} />
      <RedMarks>
        <svg width="2172" height="1400" viewBox="0 0 2172 1400" fill="none" stroke="#ed1c24" strokeWidth="5">
          <path d="M516 165.500H592V154L666 179.500L592 205V192.500H516Z" strokeLinejoin="round" />
          <path d="M1366.500 48.500H1389.500V84H1401L1378 119L1355.500 84H1366.500Z" strokeLinejoin="round" />
          <path d="M549.500 949.500V900H534L565.500 851L597 900H581.500V949.500Z" strokeLinejoin="round" />
          <path d="M419.500 831.500H796.500" />
        </svg>
      </RedMarks>
    </Shell>
  );
}
